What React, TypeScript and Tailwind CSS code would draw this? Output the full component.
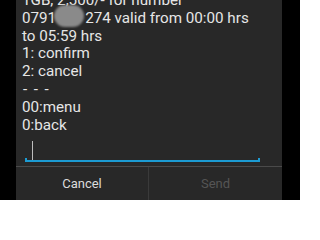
import React from "react";

export default function App() {
  return (
    <div
      className="w-[300px] h-[200px] bg-black overflow-hidden flex"
      style={{ fontFamily: "Roboto, 'Noto Sans', sans-serif" }}
    >
      <div className="ml-[16px] w-[266px] h-full bg-[#282828] flex flex-col overflow-hidden">
        <div className="mt-[-8px] pl-[6px] text-[15.2px] leading-[17.8px] text-[#e6e6e6] whitespace-nowrap">
          <div>1GB, 2,500/- for number</div>
          <div className="flex">
            <span>0791</span>
            <span className="relative inline-block w-[29px]">
              <span className="absolute left-[-2px] top-[-5px] w-[30px] h-[22px] rounded-full bg-[#8a8a8a] blur-[1px]" />
            </span>
            <span>274 valid from 00:00 hrs</span>
          </div>
          <div>to 05:59 hrs</div>
          <div>1: confirm</div>
          <div>2: cancel</div>
          <div className="tracking-[1.4px] pl-[1px]">- - -</div>
          <div>00:menu</div>
          <div>0:back</div>
        </div>
        <div className="ml-[9px] mr-[22px] mt-[6px] h-[26px] relative flex items-start">
          <div className="ml-[7px] mt-[1px] w-px h-[21px] bg-[#bdbdbd]" />
          <div className="absolute left-0 right-0 bottom-0 h-[2px] bg-[#1c9bd3]" />
          <div className="absolute left-0 bottom-0 w-[2px] h-[4px] bg-[#1c9bd3]" />
          <div className="absolute right-0 bottom-0 w-[2px] h-[4px] bg-[#1c9bd3]" />
        </div>
        <div className="mt-[4px] h-px bg-[#4a4a4a]" />
        <div className="flex h-[40px] text-[13px]">
          <div className="w-[132px] flex items-center justify-center text-[#dcdcdc]">Cancel</div>
          <div className="w-px bg-[#3a3a3a]" />
          <div className="flex-1 flex items-center justify-center text-[#555555]">Send</div>
        </div>
      </div>
    </div>
  );
}
